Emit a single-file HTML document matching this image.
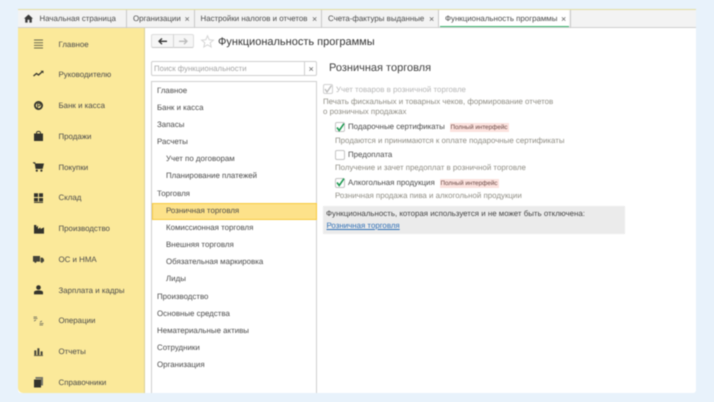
<!DOCTYPE html>
<html><head><meta charset="utf-8"><style>
html,body{margin:0;padding:0}
body{width:714px;height:402px;overflow:hidden;background:#e8f2fb;font-family:"Liberation Sans",sans-serif;position:relative;text-rendering:geometricPrecision}
#r{position:absolute;left:0;top:0;width:714px;height:402px;filter:blur(.4px)}
.a{position:absolute;white-space:nowrap}
.t{font-size:7.9px;line-height:12px;color:#4a4a4a}
.s{margin-top:.6px}
.g{font-size:7.9px;line-height:12px;color:#8f8d84}
.x{font-size:9px;color:#666;line-height:12px}
.sep{position:absolute;top:10px;width:1px;height:18px;background:#c8c8c8}
.b{position:absolute;width:8px;height:8px;border:1px solid #c4c4c4;border-radius:2px;background:#fff}
.tag{position:absolute;font-size:6.3px;line-height:9px;background:#fce2de;color:#6a4a46;white-space:nowrap;padding:0 1px}
svg{position:absolute;overflow:visible}
</style></head><body><div id="r">
<div class="a" style="left:18px;top:9px;width:678px;height:384px;background:#fff;border-radius:0 0 3px 3px"></div>
<div class="a" style="left:18px;top:9px;width:678px;height:19px;background:#f3f3f3;border-bottom:1px solid #cfcfcf;box-sizing:border-box"></div>
<div class="a" style="left:18px;top:9px;width:678px;height:1px;background:#e3dca0"></div>
<svg style="left:24px;top:14px" width="9" height="9" viewBox="0 0 9 9"><path d="M4.5 .5L9 4.6H7.8V8.6H5.4V5.8H3.6V8.6H1.2V4.6H0Z" fill="#3a3a3a"/></svg>
<div class="a t" style="left:39.5px;top:12.5px">Начальная страница</div>
<div class="sep" style="left:126px"></div>
<div class="a t" style="left:133px;top:12.5px">Организации</div><div class="a x" style="left:184.5px;top:12.5px">×</div>
<div class="sep" style="left:194px"></div>
<div class="a t" style="left:200.5px;top:12.5px">Настройки налогов и отчетов</div><div class="a x" style="left:312px;top:12.5px">×</div>
<div class="sep" style="left:321px"></div>
<div class="a t" style="left:328px;top:12.5px">Счета-фактуры выданные</div><div class="a x" style="left:429px;top:12.5px">×</div>
<div class="sep" style="left:438px"></div>
<div class="a" style="left:439px;top:10px;width:130px;height:17px;background:#fff"></div>
<div class="a t" style="left:445px;top:12.5px">Функциональность программы</div><div class="a x" style="left:561px;top:12.5px">×</div>
<div class="a" style="left:440px;top:25.5px;width:129px;height:1.2px;background:#3bb56f"></div>
<div class="sep" style="left:570px"></div>

<div class="a" style="left:18px;top:28px;width:126px;height:365px;background:#fbe99a;border-right:1px solid #d8d09a;border-radius:0 0 0 5px"></div>
<div class="a t s" style="left:58.5px;top:38px">Главное</div>
<div class="a t s" style="left:58.5px;top:68.7px">Руководителю</div>
<div class="a t s" style="left:58.5px;top:99.4px">Банк и касса</div>
<div class="a t s" style="left:58.5px;top:130.2px">Продажи</div>
<div class="a t s" style="left:58.5px;top:161px">Покупки</div>
<div class="a t s" style="left:58.5px;top:191.7px">Склад</div>
<div class="a t s" style="left:58.5px;top:222.5px">Производство</div>
<div class="a t s" style="left:58.5px;top:253.2px">ОС и НМА</div>
<div class="a t s" style="left:58.5px;top:284px">Зарплата и кадры</div>
<div class="a t s" style="left:58.5px;top:314.7px">Операции</div>
<div class="a t s" style="left:58.5px;top:345.5px">Отчеты</div>
<div class="a t s" style="left:58.5px;top:376.2px">Справочники</div>

<svg style="left:34px;top:39px" width="9" height="10" viewBox="0 0 9 10"><path d="M0 1H9M0 3.7H9M0 6.4H9M0 9H9" stroke="#6b6a50" stroke-width="1"/></svg>
<svg style="left:33px;top:70px" width="11" height="8" viewBox="0 0 11 8"><path d="M.5 6L3.5 3.5L5.5 5L9.5 1.5" stroke="#3a3a30" stroke-width="1.4" fill="none"/><path d="M7.5 .8H10.5V3.5Z" fill="#3a3a30"/></svg>
<svg style="left:34px;top:101px" width="9" height="9" viewBox="0 0 9 9"><circle cx="4.5" cy="4.5" r="3.6" fill="#fbe99a" stroke="#33332c" stroke-width="1.8"/><path d="M3.6 7V2.6H5.2A1.1 1.1 0 0 1 5.2 4.8H3.6" stroke="#33332c" fill="none" stroke-width=".9"/></svg>
<svg style="left:34px;top:131px" width="9" height="10" viewBox="0 0 9 10"><path d="M0 2.5H9V10H0Z" fill="#33332c"/><path d="M2.5 3V1.8A2 1.4 0 0 1 6.5 1.8V3" stroke="#33332c" fill="none"/></svg>
<svg style="left:33px;top:162px" width="11" height="10" viewBox="0 0 11 10"><path d="M0 .6H2L2.8 6.6H9.4L10.6 1.8H2.2Z" fill="#33332c" stroke="#33332c" stroke-width=".6"/><circle cx="3.8" cy="8.6" r="1.1" fill="#33332c"/><circle cx="8.4" cy="8.6" r="1.1" fill="#33332c"/></svg>
<svg style="left:34px;top:193px" width="9" height="10" viewBox="0 0 9 10"><path d="M0 .2H4V4H0ZM5 .2H9V4H5ZM0 5H4V8.4H0ZM5 5H9V8.4H5Z" fill="#33332c"/><path d="M0 9.4H9" stroke="#33332c"/></svg>
<svg style="left:34px;top:224px" width="10" height="10" viewBox="0 0 10 10"><path d="M0 1H2.4V3.2L4 1.6V5L6.5 3.4V5L10 3.4V9.6H0Z" fill="#33332c"/></svg>
<svg style="left:33px;top:256px" width="11" height="7" viewBox="0 0 11 7"><path d="M0 0H7V5.6H0ZM7.6 1.6H9.6L11 3.4V5.6H7.6Z" fill="#44443a"/><circle cx="2.4" cy="5.8" r="1.1" fill="#44443a"/><circle cx="8.8" cy="5.8" r="1.1" fill="#44443a"/></svg>
<svg style="left:34px;top:285px" width="9" height="10" viewBox="0 0 9 10"><circle cx="4.5" cy="2.5" r="2.3" fill="#33332c"/><path d="M0 9.4V7.2C0 6 2 5.4 4.5 5.4S9 6 9 7.2V9.4Z" fill="#33332c"/></svg>
<svg style="left:33px;top:316px" width="11" height="10" viewBox="0 0 11 10"><path d="M.5 2.5H4.5M.5 1H4M6.5 7.5H10.5M6.5 9H10M1 5L3 4M7 6L9 5" stroke="#66665a" stroke-width=".8" fill="none"/></svg>
<svg style="left:34px;top:347px" width="9" height="9" viewBox="0 0 9 9"><path d="M.3 3.4H2.3V8H.3ZM3.4 1.2H5.4V8H3.4ZM6.6 4.4H8.6V8H6.6Z" fill="#44443a"/><path d="M0 8.6H9" stroke="#44443a" stroke-width=".8"/></svg>
<svg style="left:33px;top:377px" width="10" height="11" viewBox="0 0 10 11"><path d="M2.5 0H10V8.5H8V2H2.5Z" fill="#77776a"/><path d="M1 2.5H8V10.5H1Z" fill="#33332c"/></svg>

<div class="a" style="left:151px;top:34px;width:43px;height:14px;background:#f6f6f6;border:1px solid #ddd;border-bottom:1.5px solid #c8c8c8;border-radius:2px;box-sizing:border-box"></div>
<div class="a" style="left:173px;top:34px;width:1px;height:14px;background:#d4d4d4"></div>
<svg style="left:158px;top:38px" width="10" height="7" viewBox="0 0 10 7"><path d="M4 .5L1 3.3L4 6.1M1 3.3H9" stroke="#333" stroke-width="1.3" fill="none"/></svg>
<svg style="left:178px;top:38px" width="10" height="7" viewBox="0 0 10 7"><path d="M6 .5L9 3.3L6 6.1M9 3.3H1" stroke="#bbb" stroke-width="1.3" fill="none"/></svg>
<svg style="left:201px;top:35px" width="13" height="13" viewBox="0 0 13 13"><path d="M6.5 .8L8.2 4.8L12.4 5.1L9.2 7.8L10.2 12L6.5 9.8L2.8 12L3.8 7.8L.6 5.1L4.8 4.8Z" fill="#fff" stroke="#d5d5d5" stroke-width="1"/></svg>
<div class="a" style="left:218px;top:34.5px;font-size:11px;line-height:14px;color:#333">Функциональность программы</div>

<div class="a" style="left:151px;top:61px;width:166px;height:15px;border:1px solid #cfcfcf;border-radius:2px;box-sizing:border-box;background:#fff"></div>
<div class="a" style="left:304px;top:61px;width:1px;height:15px;background:#cfcfcf"></div>
<div class="a" style="left:154px;top:63px;font-size:7.8px;line-height:12px;color:#a5a5a5">Поиск функциональности</div>
<div class="a" style="left:308.5px;top:62.5px;font-size:9px;line-height:12px;color:#666">×</div>

<div class="a" style="left:151px;top:81px;width:166px;height:312px;border:1px solid #cfcfcf;border-bottom:0;box-sizing:border-box;background:#fff"></div>
<div class="a" style="left:152px;top:202.5px;width:165px;height:17px;background:#fde28a;border:1px solid #f6c93f;box-sizing:border-box"></div>
<div class="a t s" style="left:157px;top:84px">Главное</div>
<div class="a t s" style="left:157px;top:101.2px">Банк и касса</div>
<div class="a t s" style="left:157px;top:118.3px">Запасы</div>
<div class="a t" style="left:157px;top:135.5px">Расчеты</div>
<div class="a t" style="left:166px;top:152.7px">Учет по договорам</div>
<div class="a t s" style="left:166px;top:169.8px">Планирование платежей</div>
<div class="a t s" style="left:157px;top:187px">Торговля</div>
<div class="a t s" style="left:166px;top:204.2px">Розничная торговля</div>
<div class="a t s" style="left:166px;top:221.3px">Комиссионная торговля</div>
<div class="a t" style="left:166px;top:238.5px">Внешняя торговля</div>
<div class="a t s" style="left:166px;top:255.7px">Обязательная маркировка</div>
<div class="a t s" style="left:166px;top:272.8px">Лиды</div>
<div class="a t s" style="left:157px;top:290px">Производство</div>
<div class="a t s" style="left:157px;top:307.2px">Основные средства</div>
<div class="a t s" style="left:157px;top:324.3px">Нематериальные активы</div>
<div class="a t" style="left:157px;top:341.5px">Сотрудники</div>
<div class="a t" style="left:157px;top:358.7px">Организация</div>

<div class="a" style="left:329px;top:61px;font-size:11px;line-height:15px;color:#3f3f3f">Розничная торговля</div>
<div class="b" style="left:323px;top:84px;border-color:#d0d0d0"></div>
<svg style="left:323px;top:84px" width="10" height="10" viewBox="0 0 10 10"><path d="M2 5L4 8L8.4 1.6" stroke="#bdbdbd" stroke-width="1.4" fill="none"/></svg>
<div class="a" style="left:336px;top:84px;font-size:7.9px;line-height:12px;color:#b5b5b5">Учет товаров в розничной торговле</div>
<div class="a g" style="left:323px;top:96px">Печать фискальных и товарных чеков, формирование отчетов</div>
<div class="a g" style="left:323px;top:106px">о розничных продажах</div>

<div class="b" style="left:335px;top:122px"></div>
<svg style="left:335px;top:121.5px" width="11" height="11" viewBox="0 0 11 11"><path d="M2 5.5L4.2 8.5L9 1.6" stroke="#1f9a52" stroke-width="1.6" fill="none"/></svg>
<div class="a t" style="left:348px;top:120.5px">Подарочные сертификаты</div>
<div class="tag" style="left:449.5px;top:123px">Полный интерфейс</div>
<div class="a g" style="left:335px;top:134.5px">Продаются и принимаются к оплате подарочные сертификаты</div>

<div class="b" style="left:335px;top:150px"></div>
<div class="a t" style="left:348px;top:148.5px">Предоплата</div>
<div class="a g" style="left:335px;top:162px">Получение и зачет предоплат в розничной торговле</div>

<div class="b" style="left:335px;top:178px"></div>
<svg style="left:335px;top:177px" width="11" height="11" viewBox="0 0 11 11"><path d="M2 5.5L4.2 8.5L9 1.6" stroke="#1f9a52" stroke-width="1.6" fill="none"/></svg>
<div class="a t" style="left:348px;top:176.5px">Алкогольная продукция</div>
<div class="tag" style="left:439.5px;top:179px">Полный интерфейс</div>
<div class="a g" style="left:335px;top:189.5px">Розничная продажа пива и алкогольной продукции</div>

<div class="a" style="left:323px;top:206px;width:302px;height:28px;background:#ebebeb"></div>
<div class="a t" style="left:326px;top:207.5px;color:#444">Функциональность, которая используется и не может быть отключена:</div>
<div class="a" style="left:326.5px;top:220px;font-size:7.9px;line-height:12px;color:#2f6fb5;text-decoration:underline">Розничная торговля</div>
</div></body></html>
